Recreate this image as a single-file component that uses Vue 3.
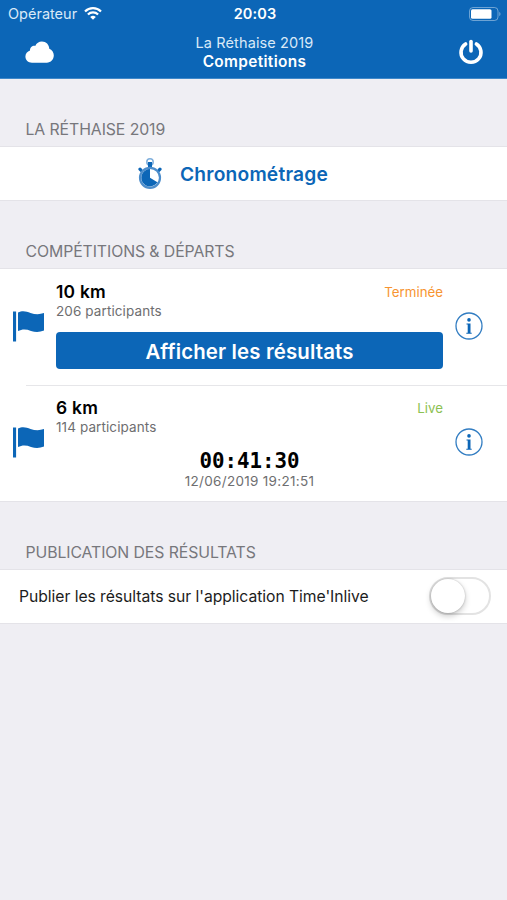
<template>
  <div class="app">
    <header class="top">
      <div class="status-bar">
        <div class="carrier">
          <span class="carrier-name">Opérateur</span>
          <svg width="18" height="13" viewBox="0 0 18 13" fill="none" stroke="#fff" stroke-width="2.2">
            <path d="M1 4.5a11.3 11.3 0 0 1 16 0"/>
            <path d="M3.9 7.5a7.2 7.2 0 0 1 10.2 0"/>
            <path d="M9 12.8L6.2 10a4 4 0 0 1 5.6 0z" fill="#fff" stroke="none"/>
          </svg>
        </div>
        <span class="clock">20:03</span>
        <svg class="battery" width="32" height="14" viewBox="0 0 32 14">
          <rect x="0.5" y="0.5" width="28.5" height="13" rx="3.5" fill="none" stroke="#fff" stroke-opacity="0.4"/>
          <rect x="2" y="2.2" width="20.5" height="9.6" rx="1.5" fill="#fff"/>
          <path d="M30.3 4.8c1.6.8 1.6 3.6 0 4.4z" fill="#fff" fill-opacity="0.45"/>
        </svg>
      </div>

      <div class="nav-bar">
        <button class="nav-btn">
          <svg width="30" height="22" viewBox="0 0 30 22" fill="#fff">
            <path d="M7 21.7C3.2 21.7.4 19 .4 15.5c0-2.8 1.9-5.2 4.6-6C4.9 6.7 7.3 4.5 10.2 4.9 11.5 2 13.9.4 16.9.4c4.2 0 7.3 3.1 7.4 7.3 2.6 1 4.500 3.500 4.500 6.600 0 4.200-3 7.400-7 7.400z"/>
          </svg>
        </button>
        <div class="nav-title">
          <span class="event">{{ eventName }}</span>
          <span class="page">Competitions</span>
        </div>
        <button class="nav-btn power">
          <svg width="26" height="26" viewBox="0 0 26 26" fill="none" stroke="#fff" stroke-width="3.6" stroke-linecap="round">
            <path d="M7.6 4.9a10 10 0 1 0 10.8 0"/>
            <path d="M13 2.5v9.500"/>
          </svg>
        </button>
      </div>
    </header>

    <!-- Chronométrage -->
    <h2 class="section-title first">LA RÉTHAISE 2019</h2>
    <section class="group timing">
      <svg width="24" height="32" viewBox="0 0 24 32">
        <circle cx="12" cy="4" r="3.2" fill="none" stroke="#7fafdc" stroke-width="1.5"/>
        <path d="M10 4h4v6h-4z" fill="#0c66b7"/>
        <path d="M3.2 12.5L2 11.2M20.8 12.5l1.2-1.3" fill="none" stroke="#0c66b7" stroke-width="3.2" stroke-linecap="round"/>
        <circle cx="12" cy="19.8" r="10" fill="#fff" stroke="#4d8dcb" stroke-width="2.2"/>
        <path d="M12 11v8.8l7.4 4.5A8.7 8.7 0 1 1 12 11z" fill="#0c66b7"/>
      </svg>
      <span class="timing-label">Chronométrage</span>
    </section>

    <!-- Courses -->
    <h2 class="section-title">COMPÉTITIONS &amp; DÉPARTS</h2>
    <section class="group">
      <div v-for="race in races" :key="race.name" class="race">
        <svg class="flag" width="32" height="31" viewBox="0 0 32 31" fill="#0c66b7">
          <path d="M0 .5h3.1v30H0z"/>
          <path d="M5 1.6C9.5-.9 13.3.4 17.5 1.9c4.5 1.6 9 1.700 13.500.2v17.500c-4.400 1.800-8.700 1.900-13 .3-4.500-1.700-8.700-2.100-13 .2z"/>
        </svg>
        <div class="race-body">
          <div class="race-head">
            <span class="race-name">{{ race.name }}</span>
            <span class="race-status" :class="race.state">{{ race.status }}</span>
          </div>
          <div class="participants">{{ race.participants }} participants</div>
          <button v-if="race.state === 'done'" class="results-btn">Afficher les résultats</button>
          <div v-else class="timer">
            <div class="elapsed">{{ race.elapsed }}</div>
            <div class="started">{{ race.started }}</div>
          </div>
        </div>
        <svg class="info" width="28" height="28" viewBox="0 0 28 28">
          <circle cx="14" cy="14" r="13" fill="none" stroke="#327dc2" stroke-width="1.3"/>
          <circle cx="14" cy="7.9" r="1.8" fill="#0c66b7"/>
          <path d="M11.5 11.5h4v9.2h1.2v1h-5.4v-1h1.4v-8.2h-1.2z" fill="#0c66b7"/>
        </svg>
      </div>
    </section>

    <!-- Publication -->
    <h2 class="section-title">PUBLICATION DES RÉSULTATS</h2>
    <section class="group publish">
      <span class="publish-label">Publier les résultats sur l'application Time'Inlive</span>
      <button class="switch" :class="{ on: published }" @click="published = !published">
        <span class="knob"></span>
      </button>
    </section>
  </div>
</template>

<script setup>
import { ref } from 'vue'

const eventName = 'La Réthaise 2019'
const published = ref(false)

const races = [
  { name: '10 km', participants: 206, status: 'Terminée', state: 'done' },
  {
    name: '6 km',
    participants: 114,
    status: 'Live',
    state: 'live',
    elapsed: '00:41:30',
    started: '12/06/2019 19:21:51'
  }
]
</script>

<style>
body {
  background: #efeef3;
}
</style>

<style scoped>
.app {
  min-height: 900px;
  background: #efeef3;
  font-family: Inter, "Liberation Sans", sans-serif;
  color: #000;
}

button {
  padding: 0;
  border: none;
  background: none;
  font-family: inherit;
  cursor: pointer;
}

svg {
  display: block;
  flex-shrink: 0;
}

.top {
  height: 79px;
  box-sizing: border-box;
  background: #0c66b7;
  border-bottom: 1px solid #3f88ca;
  color: #fff;
}

.status-bar {
  display: grid;
  grid-template-columns: 1fr auto 1fr;
  align-items: center;
  height: 27px;
  padding: 0 6px 0 8px;
}

.carrier {
  display: flex;
  align-items: center;
  gap: 7px;
}

.carrier-name {
  font-size: 14.5px;
  color: #d9e9f7;
}

.clock {
  padding-left: 1px;
  font-size: 14.5px;
  font-weight: 600;
  letter-spacing: 0.1px;
}

.battery {
  justify-self: end;
}

.nav-bar {
  display: grid;
  grid-template-columns: 30px 1fr 30px;
  align-items: center;
  height: 50px;
  padding: 0 23px 0 25px;
}

.nav-btn.power {
  justify-self: end;
}

.nav-title {
  display: flex;
  flex-direction: column;
  align-items: center;
  line-height: 18px;
}

.event {
  font-size: 14.5px;
  letter-spacing: 0.12px;
  color: #d9e9f7;
}

.page {
  font-size: 15.4px;
  font-weight: 600;
  line-height: 19px;
  letter-spacing: 0.35px;
}

.section-title {
  display: flex;
  align-items: flex-end;
  height: 69px;
  margin: 0;
  padding: 0 25.5px 6px;
  box-sizing: border-box;
  font-size: 15.8px;
  font-weight: 400;
  line-height: 22px;
  letter-spacing: -0.08px;
  color: #77777c;
}

.section-title.first {
  height: 68px;
}

.group {
  background: #fff;
  box-shadow: 0 0 0 1px #e4e3e8;
}

.timing {
  display: flex;
  align-items: center;
  gap: 18px;
  height: 53px;
  padding-left: 138px;
}

.timing-label {
  font-size: 19.2px;
  font-weight: 600;
  letter-spacing: 0.2px;
  color: #0c66b7;
}

.race {
  display: flex;
  align-items: center;
  height: 116px;
  padding: 0 24px 2px 13px;
  box-sizing: border-box;
}

.race + .race {
  background: linear-gradient(#e6e6e9, #e6e6e9) 26px 0 / 100% 1px no-repeat;
}

.flag {
  margin-right: 11px;
}

.race-body {
  flex: 1;
  height: 90px;
}

.race-head {
  display: flex;
  justify-content: space-between;
  align-items: center;
  height: 21px;
}

.race-name {
  font-size: 17.4px;
  font-weight: 600;
  letter-spacing: 0.25px;
}

.race-status {
  font-size: 13.3px;
}

.race-status.done {
  color: #f79431;
}

.race-status.live {
  color: #8cc152;
}

.participants {
  font-size: 13.5px;
  line-height: 18px;
  letter-spacing: 0.1px;
  color: #6e6e70;
}

.results-btn {
  display: block;
  width: 100%;
  height: 37px;
  margin-top: 12px;
  padding-top: 1px;
  border-radius: 4px;
  background: #0c66b7;
  color: #fff;
  font-size: 20.4px;
  font-weight: 600;
  letter-spacing: 0.15px;
}

.timer {
  margin-top: 15px;
  text-align: center;
}

.elapsed {
  font-family: "DejaVu Sans Mono", monospace;
  font-size: 20.8px;
  font-weight: 700;
  line-height: 21px;
}

.started {
  font-size: 13.5px;
  line-height: 18px;
  letter-spacing: 0.3px;
  color: #6e6e70;
}

.info {
  margin-left: 12px;
}

.publish {
  display: flex;
  align-items: center;
  justify-content: space-between;
  height: 53px;
  padding: 0 16px 1px 19px;
  box-sizing: border-box;
}

.publish-label {
  font-size: 15.7px;
  letter-spacing: -0.04px;
  color: #1c1c1c;
}

.switch {
  display: flex;
  width: 62px;
  height: 38px;
  box-sizing: border-box;
  border: 2px solid #e3e3e3;
  border-radius: 19px;
}

.knob {
  width: 34px;
  height: 34px;
  border-radius: 50%;
  background: #fff;
  box-shadow: 0 3px 6px rgba(0, 0, 0, 0.22), 0 0 2px rgba(0, 0, 0, 0.25);
}

.switch.on {
  justify-content: flex-end;
  background: #4cd964;
  border-color: #4cd964;
}
</style>
